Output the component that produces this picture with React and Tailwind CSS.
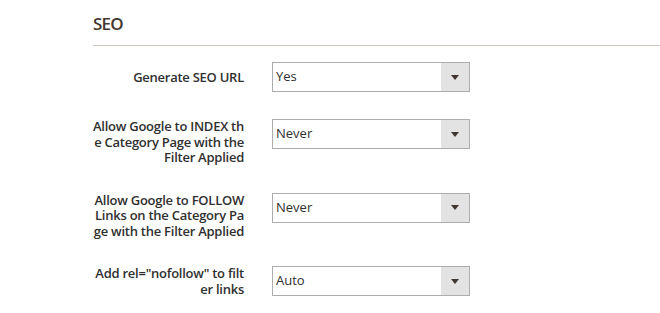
const rows = [
  { label: "Generate SEO URL", value: "Yes", pad: "pt-[8px]" },
  {
    label: "Allow Google to INDEX the Category Page with the Filter Applied",
    value: "Never",
    pad: "pt-0",
  },
  {
    label: "Allow Google to FOLLOW Links on the Category Page with the Filter Applied",
    value: "Never",
    pad: "pt-0",
  },
  { label: 'Add rel="nofollow" to filter links', value: "Auto", pad: "pt-0" },
];

function Select({ value }) {
  return (
    <div className="flex h-[30px] w-[198px] border border-[#adadad] bg-white">
      <div className="flex flex-1 items-center pl-[3px] text-[13px] text-[#303030]">
        {value}
      </div>
      <div className="flex w-[28px] items-center justify-center bg-[#e3e3e3]">
        <svg width="8" height="5" viewBox="0 0 8 5">
          <path d="M0 0h8L4 5z" fill="#41362f" />
        </svg>
      </div>
    </div>
  );
}

export default function App() {
  return (
    <div className="h-[313px] w-[660px] overflow-hidden bg-white pl-[93px] pt-[12px] font-['Open_Sans',sans-serif]">
      {/* Section title */}
      <div className="text-[17px] font-semibold leading-[24px] tracking-[-0.8px] text-[#41362f]">
        SEO
      </div>
      <div className="mt-[9px] h-px bg-[#cbc4bb]" />

      {/* Fields */}
      <div className="mt-[16px] flex flex-col gap-[27px]">
        {rows.map((row) => (
          <div key={row.label} className="flex items-start">
            <div
              className={`w-[151px] text-right text-[13px] font-semibold leading-[15.5px] tracking-[-0.25px] text-[#303030] break-all ${row.pad}`}
            >
              {row.label}
            </div>
            <div className="ml-[28px]">
              <Select value={row.value} />
            </div>
          </div>
        ))}
      </div>
    </div>
  );
}
